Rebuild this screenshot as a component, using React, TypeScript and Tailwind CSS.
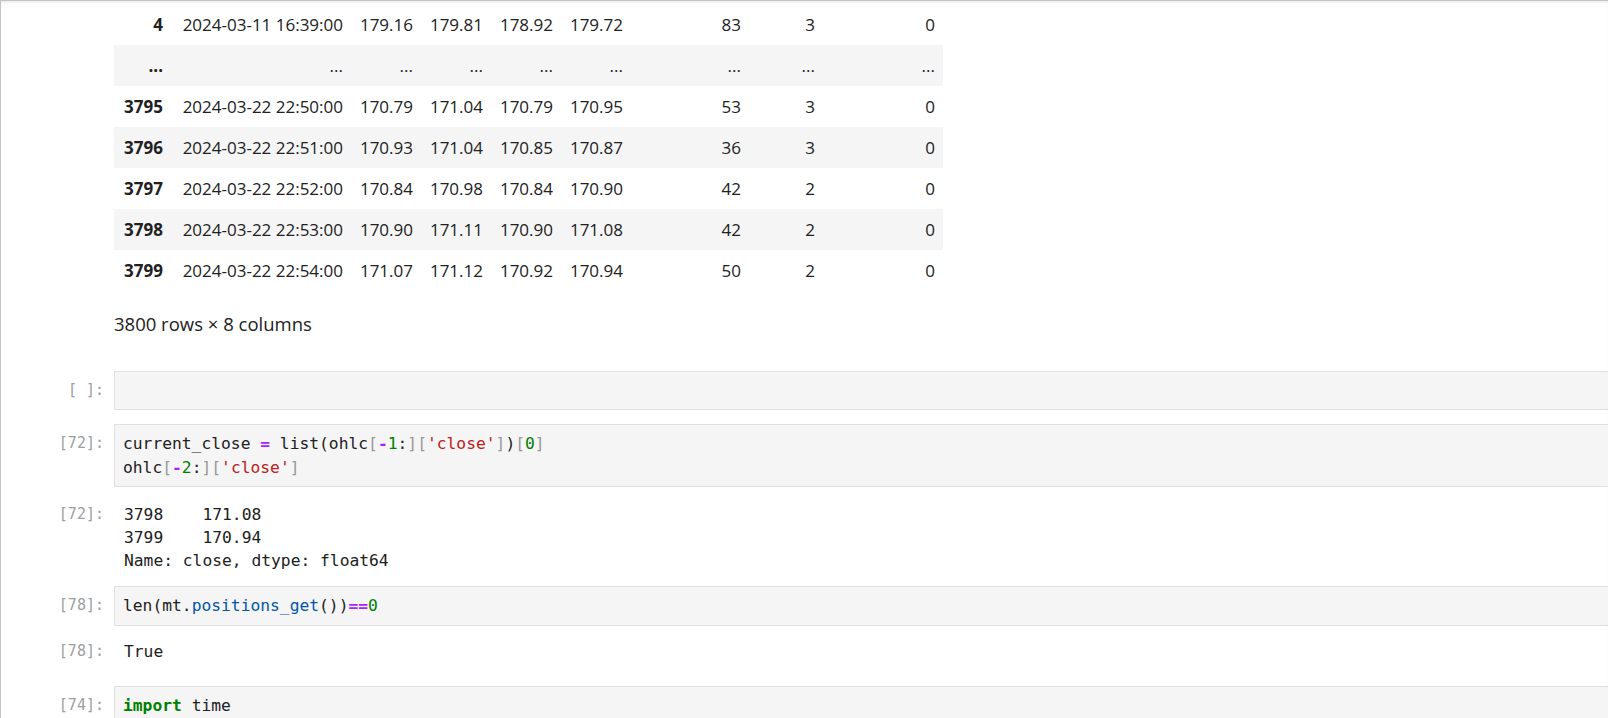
import React from 'react';

// visible tail of the ohlc dataframe
const rows: string[][] = [
  ['4', '2024-03-11 16:39:00', '179.16', '179.81', '178.92', '179.72', '83', '3', '0'],
  ['...', '...', '...', '...', '...', '...', '...', '...', '...'],
  ['3795', '2024-03-22 22:50:00', '170.79', '171.04', '170.79', '170.95', '53', '3', '0'],
  ['3796', '2024-03-22 22:51:00', '170.93', '171.04', '170.85', '170.87', '36', '3', '0'],
  ['3797', '2024-03-22 22:52:00', '170.84', '170.98', '170.84', '170.90', '42', '2', '0'],
  ['3798', '2024-03-22 22:53:00', '170.90', '171.11', '170.90', '171.08', '42', '2', '0'],
  ['3799', '2024-03-22 22:54:00', '171.07', '171.12', '170.92', '170.94', '50', '2', '0'],
];

const mono = "font-['DejaVu_Sans_Mono','Liberation_Mono',monospace]";

function InputCell({ label, children, className = '' }: { label: string; children?: React.ReactNode; className?: string }) {
  return (
    <div className={`flex gap-[10px] ${className}`}>
      <div className={`w-[103px] shrink-0 text-right pt-[8px] text-[15px] leading-[23.5px] text-[#9e9e9e] ${mono}`}>
        {label}
      </div>
      <div className={`flex-1 min-h-[39px] bg-[#f5f5f5] border border-r-0 border-[#e0e0e0] px-[8px] py-[7px] text-[16.3px] leading-[23.5px] text-[#212121] whitespace-pre ${mono}`}>
        {children}
      </div>
    </div>
  );
}

function OutputCell({ label, children, className = '' }: { label: string; children: React.ReactNode; className?: string }) {
  return (
    <div className={`flex gap-[10px] ${className}`}>
      <div className={`w-[103px] shrink-0 text-right text-[15px] leading-[23px] text-[#9e9e9e] ${mono}`}>{label}</div>
      <div className={`flex-1 pl-[10px] text-[16.3px] leading-[23px] text-[#212121] whitespace-pre ${mono}`}>{children}</div>
    </div>
  );
}

const B = ({ children }: { children: React.ReactNode }) => <span className="text-[#999999]">{children}</span>;
const Op = ({ children }: { children: React.ReactNode }) => <span className="text-[#aa22ff] font-bold">{children}</span>;
const Num = ({ children }: { children: React.ReactNode }) => <span className="text-[#008000]">{children}</span>;
const Str = ({ children }: { children: React.ReactNode }) => <span className="text-[#ba2121]">{children}</span>;

export default function App() {
  return (
    <div className="w-full h-[718px] overflow-hidden bg-white border-l border-t border-[#c4c4c4] shadow-[inset_0_2px_2px_rgba(0,0,0,0.06)]">
      {/* dataframe output */}
      <div className="ml-[113px] mt-[3px] w-[829px] text-[17px] text-[#212121] font-['Open_Sans','Noto_Sans',sans-serif]">
        {rows.map((r, i) => (
          <div
            key={i}
            className={`grid grid-cols-[57px_180px_70px_70px_70px_70px_118px_74px_120px] h-[41px] items-center ${i % 2 === 1 ? 'bg-[#f5f5f5]' : ''}`}
          >
            {r.map((c, j) => (
              <div key={j} className={`text-right pr-[8px] whitespace-nowrap ${j === 0 ? 'font-bold' : ''}`}>
                {c}
              </div>
            ))}
          </div>
        ))}
        <div className="mt-[21px] text-[18.5px] leading-[24px]">3800 rows × 8 columns</div>
      </div>

      <InputCell label="[ ]:" className="mt-[35px]" />

      <InputCell label="[72]:" className="mt-[14px]">
        current_close <Op>=</Op> list(ohlc<B>[</B><Op>-</Op><Num>1</Num>:<B>][</B><Str>'close'</Str><B>]</B>)<B>[</B><Num>0</Num><B>]</B>
        {'\n'}ohlc<B>[</B><Op>-</Op><Num>2</Num>:<B>][</B><Str>'close'</Str><B>]</B>
      </InputCell>

      <OutputCell label="[72]:" className="mt-[16px]">
        {'3798    171.08\n3799    170.94\nName: close, dtype: float64'}
      </OutputCell>

      <InputCell label="[78]:" className="mt-[14px]">
        len(mt.<span className="text-[#0055aa]">positions_get</span>())<Op>==</Op><Num>0</Num>
      </InputCell>

      <OutputCell label="[78]:" className="mt-[14px]">
        True
      </OutputCell>

      <InputCell label="[74]:" className="mt-[23px]">
        <span className="text-[#008000] font-bold">import</span> time
      </InputCell>
    </div>
  );
}
